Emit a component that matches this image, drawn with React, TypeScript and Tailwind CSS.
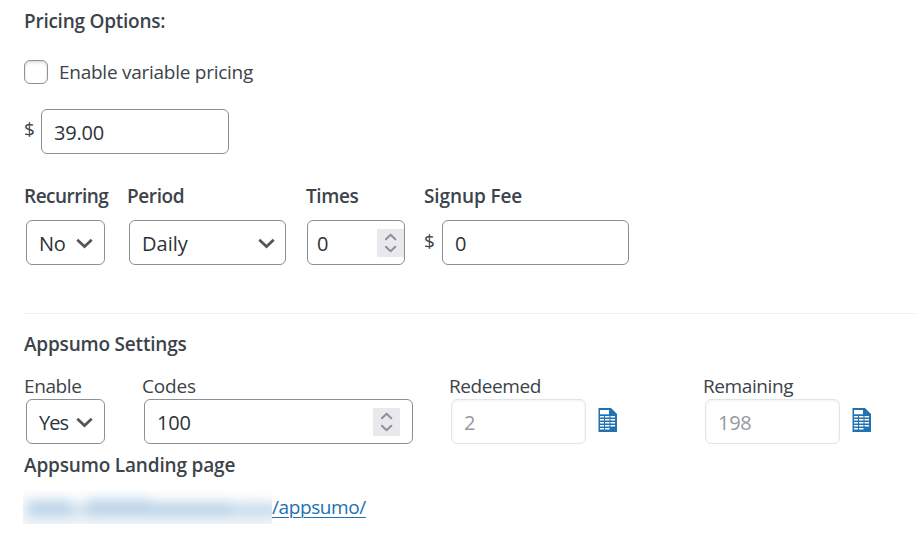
import type { ReactNode } from "react";

function Chevron({ className = "" }: { className?: string }) {
  return (
    <svg className={`mt-0.5 h-[11px] w-[17px] shrink-0 ${className}`} viewBox="0 0 17 11" fill="none">
      <path d="M1.3 1.8 8.5 8.6 15.7 1.8" stroke="#555555" strokeWidth="2.7" />
    </svg>
  );
}

function Spinner({ className = "" }: { className?: string }) {
  return (
    <span className={`flex h-7 w-[27px] items-center justify-center bg-[#e9e9ed] ${className}`}>
      <svg className="h-[20px] w-[12px]" viewBox="0 0 12 20" fill="none" stroke="#8f8f9d" strokeWidth="2" strokeLinecap="round" strokeLinejoin="round">
        <path d="M0.9 6.3 5.6 1.8l4.7 4.5M0.9 13.7 5.6 18.2l4.7-4.5" />
      </svg>
    </span>
  );
}

function SheetIcon() {
  return (
    <svg className="ml-3 mt-[9px] h-6 w-[19px] shrink-0" viewBox="0 0 19 24">
      <path d="M0.5 0H13l6 6v18H0.5z" fill="#2271b1" />
      <g fill="#fff">
        <path d="M2 2h9v4.3H2z" />
        <path d="M2 8h4v1.6H2zM7 8h4.5v1.6H7zM12.5 8h4.5v1.6h-4.5z" />
        <path d="M2 11h4v1.6H2zM7 11h4.5v1.6H7zM12.5 11h4.5v1.6h-4.5z" />
        <path d="M2 14h4v1.6H2zM7 14h4.5v1.6H7zM12.5 14h4.5v1.6h-4.5z" />
        <path d="M2 17h4v1.6H2zM7 17h4.5v1.6H7zM12.5 17h4.5v1.6h-4.5z" />
        <path d="M2 20h4v1.4H2zM7 20h4.5v1.4H7z" />
      </g>
    </svg>
  );
}

function Box({ className = "", children }: { className?: string; children: ReactNode }) {
  return (
    <div className={`flex h-[45px] shrink-0 items-center rounded-md border border-[#8c8f94] bg-white pl-3 text-[20px] tracking-[-0.2px] text-[#2c3338] ${className}`}>
      {children}
    </div>
  );
}

function DisabledBox({ children }: { children: ReactNode }) {
  return (
    <div className="flex h-[45px] w-[135px] shrink-0 items-center rounded-md border border-[#e3e4e6] bg-white pl-3 pt-0.5 text-[20px] tracking-[-0.3px] text-[#96999c] shadow-[inset_0_1px_3px_rgba(0,0,0,0.06)]">
      {children}
    </div>
  );
}

export default function App() {
  return (
    <main className="h-[535px] w-[916px] overflow-hidden bg-white pl-6 pt-2 font-['Open_Sans','Noto_Sans',sans-serif] text-[19px] leading-[26px] tracking-[-0.4px] whitespace-nowrap text-[#3c434a]">
      <h2 className="font-semibold tracking-[-0.25px]">Pricing Options:</h2>
      <div className="mt-[25px] flex h-[26px] items-center">
        <span className="h-6 w-6 rounded-md border border-[#8c8f94] shadow-[inset_0_2px_3px_rgba(0,0,0,0.12)]" />
        <span className="ml-[11px] tracking-[-0.26px]">Enable variable pricing</span>
      </div>
      <div className="mt-6 flex h-[45px]">
        <span className="w-[17px] pt-[7px]">$</span>
        <Box className="w-[188px] pt-0.5">39.00</Box>
      </div>

      <div className="mt-[29px] flex">
        <div className="w-[104px]">
          <h3 className="font-semibold tracking-[-0.5px]">Recurring</h3>
          <Box className="ml-0.5 mt-[11px] w-[79px]">
            <span className="w-[37px] pt-0.5">No</span>
            <Chevron />
          </Box>
        </div>
        <div className="w-[178px]">
          <h3 className="-ml-px font-semibold">Period</h3>
          <Box className="ml-px mt-[11px] w-[157px]">
            <span className="w-[116px] pt-0.5 tracking-[0px]">Daily</span>
            <Chevron />
          </Box>
        </div>
        <div className="w-[118px]">
          <h3 className="font-semibold">Times</h3>
          <Box className="ml-px mt-[11px] w-[98px] pl-[9px]">
            <span className="pt-0.5">0</span>
            <Spinner className="ml-auto" />
          </Box>
        </div>
        <div>
          <h3 className="font-semibold tracking-[-0.1px]">Signup Fee</h3>
          <div className="mt-[11px] flex">
            <span className="w-[18px] pt-2">$</span>
            <Box className="w-[187px] pt-0.5">0</Box>
          </div>
        </div>
      </div>

      <hr className="mt-12 border-[#f0f0f1]" />
      <h2 className="mt-[17px] font-semibold tracking-[-0.2px]">Appsumo Settings</h2>

      <div className="mt-4 flex">
        <div className="w-[118px]">
          <div>Enable</div>
          <Box className="ml-0.5 w-[79px]">
            <span className="w-[37px] pt-0.5 tracking-[-0.9px]">Yes</span>
            <Chevron />
          </Box>
        </div>
        <div className="w-[308px]">
          <div className="tracking-[-0.2px]">Codes</div>
          <Box className="ml-0.5 w-[269px] pr-3">
            <span className="pt-0.5">100</span>
            <Spinner className="ml-auto" />
          </Box>
        </div>
        <div className="w-[253px]">
          <div className="-ml-px">Redeemed</div>
          <div className="ml-px flex">
            <DisabledBox>2</DisabledBox>
            <SheetIcon />
          </div>
        </div>
        <div>
          <div>Remaining</div>
          <div className="ml-0.5 flex">
            <DisabledBox>198</DisabledBox>
            <SheetIcon />
          </div>
        </div>
      </div>

      <h3 className="mt-2 font-semibold tracking-[-0.17px]">Appsumo Landing page</h3>
      <div className="mt-3 flex text-[#2271b1]">
        <span className="-ml-px flex h-[34px] w-[249px] items-center overflow-hidden bg-linear-to-b from-white to-[#f1f6fa]">
          <span className="ml-1 mt-0.5 flex w-[252px] shrink-0 items-end opacity-27 blur-[6px]">
            <span className="h-[17px] w-[44px] bg-[#2271b1]" />
            <span className="h-[14px] w-[16px] bg-[#2271b1]/60" />
            <span className="h-[18px] w-[62px] bg-[#2271b1]" />
            <span className="h-[15px] w-[82px] bg-[#2271b1]" />
            <span className="h-[14px] w-[48px] bg-[#2271b1]/80" />
          </span>
        </span>
        <a className="mt-1 underline decoration-1 underline-offset-[3px]">/appsumo/</a>
      </div>
    </main>
  );
}
